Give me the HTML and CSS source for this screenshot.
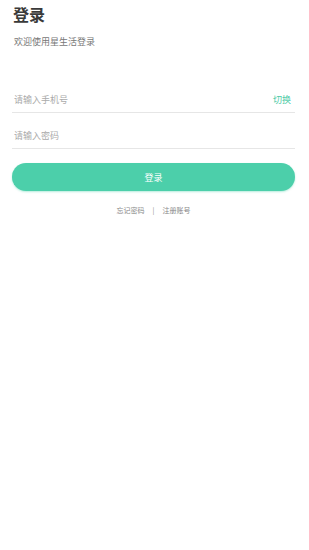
FILE: index.html
```html
<!DOCTYPE html>
<html lang="zh-CN">

<head>
  <meta charset="UTF-8">
  <meta name="viewport" content="width=device-width, initial-scale=1.0">
  <title>登录</title>
  <link rel="stylesheet" href="styles.css">
</head>

<body>
  <div class="container">
    <h1 class="title">登录</h1>
    <p class="subtitle">欢迎使用星生活登录</p>
    <form class="login-form">
      <div class="field">
        <input type="text" name="phone" placeholder="请输入手机号">
        <span class="switch">切换</span>
      </div>
      <div class="field">
        <input type="password" name="password" placeholder="请输入密码">
      </div>
      <button type="button" class="login-button">登录</button>
    </form>
    <div class="links">
      <a href="#">忘记密码</a>
      <span class="divider">|</span>
      <a href="#">注册账号</a>
    </div>
  </div>
</body>

</html>
```

FILE: styles.css
```css
body {
  margin: 0;
  background: #fff;
  font-family: "Noto Sans CJK SC", "Noto Sans", sans-serif;
}

.container {
  padding: 2px 14px 0 12px;
}

.title {
  margin: 0 0 0 1px;
  font-size: 16px;
  line-height: 24px;
  font-weight: 600;
  color: #3a3a3a;
}

.subtitle {
  margin: 9px 0 0 2px;
  font-size: 9px;
  line-height: 14px;
  color: #777;
}

.login-form {
  margin-top: 28px;
}

.field {
  display: flex;
  align-items: center;
  height: 13px;
  padding: 16px 0 6px;
  border-bottom: 1px solid #e6e6e6;
}

.field input {
  flex: 1;
  border: none;
  outline: none;
  padding: 0 0 0 2px;
  font-family: inherit;
  font-size: 9px;
  line-height: 13px;
  color: #333;
  background: transparent;
}

.field input::placeholder {
  color: #aaa;
}

.switch {
  font-size: 9px;
  line-height: 13px;
  color: #4ccaa6;
  margin-right: 4px;
}

.login-button {
  display: block;
  width: 100%;
  height: 28px;
  margin-top: 14px;
  border: none;
  border-radius: 14px;
  background-color: #4ccfaa;
  color: #fff;
  font-family: inherit;
  font-size: 9px;
  box-shadow: 0 1px 2px rgba(76, 207, 170, 0.4);
}

.links {
  display: flex;
  justify-content: center;
  gap: 8px;
  margin-top: 13px;
  font-size: 7px;
  line-height: 12px;
  color: #888;
}

.links a {
  color: #888;
  text-decoration: none;
}
```
